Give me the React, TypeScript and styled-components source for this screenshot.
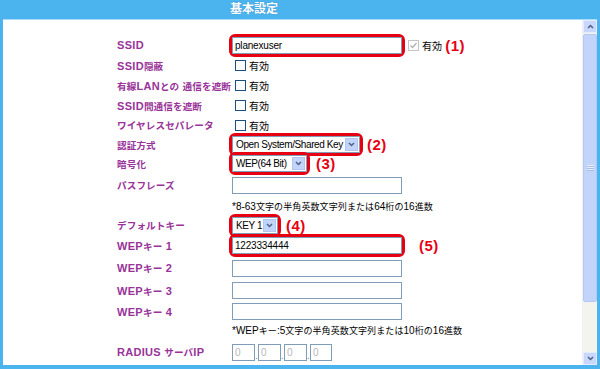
import React from "react";
import styled, { createGlobalStyle } from "styled-components";

const Global = createGlobalStyle`
  html, body { margin: 0; padding: 0; background: #4bb3ee; }
  body { width: 600px; height: 369px; overflow: hidden; font-family: "Liberation Sans", "Noto Sans CJK JP", sans-serif; }
`;

const Frame = styled.div`
  width: 600px;
  height: 369px;
  background: #4bb3ee;
  display: flex;
  flex-direction: column;
`;

const Title = styled.div`
  height: 19px;
  line-height: 19px;
  padding-right: 92px;
  text-align: center;
  color: #fff;
  font-size: 12px;
  font-weight: bold;
  text-shadow: 0 0 1px rgba(0, 60, 120, 0.4);
`;

const Panel = styled.div`
  margin: 0 3px;
  height: 346px;
  background: #fff;
  border-top: 1px solid #a9dcf8;
  box-sizing: border-box;
  display: flex;
  overflow: hidden;
`;

const Content = styled.div`
  flex: 1;
  padding: 14px 0 0 114px;
  display: grid;
  grid-template-columns: 112px auto;
  align-content: start;
`;

const Label = styled.div<{ $h: number }>`
  height: ${(p) => p.$h}px;
  display: flex;
  align-items: center;
  color: #993399;
  font-size: 11px;
  font-weight: bold;
  white-space: pre;
  letter-spacing: 0.3px;
`;

const Jp = styled.span<{ $size?: number }>`
  font-size: ${(p) => p.$size ?? 9.6}px;
  letter-spacing: 0.1px;
`;

const Cell = styled.div<{ $h: number }>`
  height: ${(p) => p.$h}px;
  display: flex;
  align-items: center;
  font-size: 10px;
  color: #000;
  white-space: nowrap;
`;

const Highlight = styled.div<{ $on?: boolean }>`
  display: inline-flex;
  align-items: center;
  border: 3px solid ${(p) => (p.$on ? "#e60012" : "transparent")};
  border-radius: 6px;
`;

const TextBox = styled.div<{ $w?: number }>`
  width: ${(p) => p.$w ?? 170}px;
  height: 17px;
  box-sizing: border-box;
  border: 1px solid #7f9db9;
  background: #fff;
  font-size: 10px;
  letter-spacing: -0.2px;
  line-height: 15px;
  padding-left: 2px;
  color: #000;
`;

const IpBox = styled(TextBox)`
  color: #b8b8b8;
`;

const Dot = styled.span`
  width: 3px;
  font-size: 10px;
  color: #888;
  align-self: flex-end;
  line-height: 10px;
`;

const Select = styled.div<{ $w: number }>`
  width: ${(p) => p.$w}px;
  height: 17px;
  box-sizing: border-box;
  border: 1px solid #7f9db9;
  background: #fff;
  display: flex;
  align-items: center;
  justify-content: space-between;
  font-size: 10px;
  letter-spacing: -0.4px;
  padding: 0 1px 0 3px;
  white-space: nowrap;
  overflow: hidden;
`;

const DropBtn = styled.div`
  flex: none;
  width: 13px;
  height: 13px;
  background: #c3d4fb;
  border: 1px solid #b3c6f0;
  box-sizing: border-box;
  display: flex;
  align-items: center;
  justify-content: center;
`;

const Check = styled.div<{ $disabled?: boolean }>`
  width: 11px;
  height: 11px;
  box-sizing: border-box;
  border: 1px solid ${(p) => (p.$disabled ? "#c4c4c4" : "#1c4f7c")};
  background: #fff;
  margin: 0 3px;
  display: flex;
  align-items: center;
  justify-content: center;
`;

const Note = styled.span`
  font-size: 10px;
  color: #000;
  padding-left: 3px;
`;

const Mark = styled.span<{ $ml: number }>`
  margin-left: ${(p) => p.$ml}px;
  color: #e60012;
  font-size: 15px;
  font-weight: bold;
  letter-spacing: 0.5px;
`;

const ScrollBar = styled.div`
  width: 14px;
  display: flex;
  flex-direction: column;
  background: #f4f4ef;
  border-left: 1px solid #eef1f6;
`;

const ArrowBtn = styled.div`
  height: 11px;
  background: #c8d7fb;
  border: 1px solid #e4ecfd;
  display: flex;
  align-items: center;
  justify-content: center;
`;

const Thumb = styled.div`
  height: 268px;
  margin-top: 1px;
  background: #c3d4fb;
  border: 1px solid #b5c8f3;
  border-radius: 2px;
  box-sizing: border-box;
  display: flex;
  align-items: center;
  justify-content: center;
`;

const Grip = styled.div`
  width: 7px;
  height: 6px;
  background: repeating-linear-gradient(#e8eefc 0 1px, #a9bdea 1px 2px);
`;

const Track = styled.div`
  flex: 1;
`;

const CJK = /([\u3000-\u30ff\u4e00-\u9fff\uff00-\uffef]+)/;

const T = ({ text, size }: { text: string; size?: number }) => (
  <span>
    {text.split(CJK).map((part, i) =>
      i % 2 === 1 ? (
        <Jp key={i} $size={size}>
          {part}
        </Jp>
      ) : (
        <React.Fragment key={i}>{part}</React.Fragment>
      )
    )}
  </span>
);

const Chevron = ({ down }: { down?: boolean }) => (
  <svg width="7" height="5" viewBox="0 0 7 5">
    <path
      d={down ? "M1 1 L3.5 3.5 L6 1" : "M1 4 L3.5 1.5 L6 4"}
      fill="none"
      stroke="#4d6185"
      strokeWidth="1.5"
    />
  </svg>
);

const CheckMark = () => (
  <svg width="9" height="9" viewBox="0 0 9 9">
    <path d="M1.5 4.5 L3.5 6.5 L7.5 2" fill="none" stroke="#b0b0b0" strokeWidth="1.3" />
  </svg>
);

const RowLabel = ({ text, h }: { text: string; h: number }) => (
  <Label $h={h}>
    <T text={text} />
  </Label>
);

const CheckRow = ({ label, h }: { label: string; h: number }) => (
  <>
    <RowLabel text={label} h={h} />
    <Cell $h={h}>
      <Highlight>
        <Check />
        <T text="有効" size={10} />
      </Highlight>
    </Cell>
  </>
);

const App: React.FC = () => (
  <Frame>
    <Global />
    <Title>基本設定</Title>
    <Panel>
      <Content>
        <RowLabel text="SSID" h={22} />
        <Cell $h={22}>
          <Highlight $on>
            <TextBox>planexuser</TextBox>
          </Highlight>
          <Check $disabled>
            <CheckMark />
          </Check>
          <T text="有効" size={10} />
          <Mark $ml={3}>(1)</Mark>
        </Cell>

        <CheckRow label="SSID隠蔽" h={19} />
        <CheckRow label="有線LANとの 通信を遮断" h={21} />
        <CheckRow label="SSID間通信を遮断" h={19} />
        <CheckRow label="ワイヤレスセパレータ" h={20} />

        <RowLabel text="認証方式" h={19} />
        <Cell $h={19}>
          <Highlight $on>
            <Select $w={128}>
              <span>Open System/Shared Key</span>
              <DropBtn>
                <Chevron down />
              </DropBtn>
            </Select>
          </Highlight>
          <Mark $ml={4}>(2)</Mark>
        </Cell>

        <RowLabel text="暗号化" h={19} />
        <Cell $h={19}>
          <Highlight $on>
            <Select $w={75}>
              <span>WEP(64 Bit)</span>
              <DropBtn>
                <Chevron down />
              </DropBtn>
            </Select>
          </Highlight>
          <Mark $ml={6}>(3)</Mark>
        </Cell>

        <RowLabel text="パスフレーズ" h={24} />
        <Cell $h={24}>
          <Highlight>
            <TextBox />
          </Highlight>
        </Cell>

        <Label $h={18} />
        <Cell $h={18}>
          <Note>
            <T text="*8-63文字の半角英数文字列または64桁の16進数" size={9} />
          </Note>
        </Cell>

        <RowLabel text="デフォルトキー" h={20} />
        <Cell $h={20}>
          <Highlight $on>
            <Select $w={46}>
              <span>KEY 1</span>
              <DropBtn>
                <Chevron down />
              </DropBtn>
            </Select>
          </Highlight>
          <Mark $ml={5}>(4)</Mark>
        </Cell>

        <RowLabel text="WEPキー 1" h={21} />
        <Cell $h={21}>
          <Highlight $on>
            <TextBox>1223334444</TextBox>
          </Highlight>
          <Mark $ml={14}>(5)</Mark>
        </Cell>

        <RowLabel text="WEPキー 2" h={24} />
        <Cell $h={24}>
          <Highlight>
            <TextBox />
          </Highlight>
        </Cell>

        <RowLabel text="WEPキー 3" h={21} />
        <Cell $h={21}>
          <Highlight>
            <TextBox />
          </Highlight>
        </Cell>

        <RowLabel text="WEPキー 4" h={21} />
        <Cell $h={21}>
          <Highlight>
            <TextBox />
          </Highlight>
        </Cell>

        <Label $h={16} />
        <Cell $h={16}>
          <Note>
            <T text="*WEPキー:5文字の半角英数文字列または10桁の16進数" size={9} />
          </Note>
        </Cell>

        <RowLabel text="RADIUS サーバIP" h={28} />
        <Cell $h={28}>
          <Highlight>
            <IpBox $w={23}>0</IpBox>
            <Dot>.</Dot>
            <IpBox $w={23}>0</IpBox>
            <Dot>.</Dot>
            <IpBox $w={23}>0</IpBox>
            <Dot>.</Dot>
            <IpBox $w={22}>0</IpBox>
          </Highlight>
        </Cell>
      </Content>
      <ScrollBar>
        <ArrowBtn>
          <Chevron />
        </ArrowBtn>
        <Thumb>
          <Grip />
        </Thumb>
        <Track />
        <ArrowBtn>
          <Chevron down />
        </ArrowBtn>
      </ScrollBar>
    </Panel>
  </Frame>
);

export default App;
